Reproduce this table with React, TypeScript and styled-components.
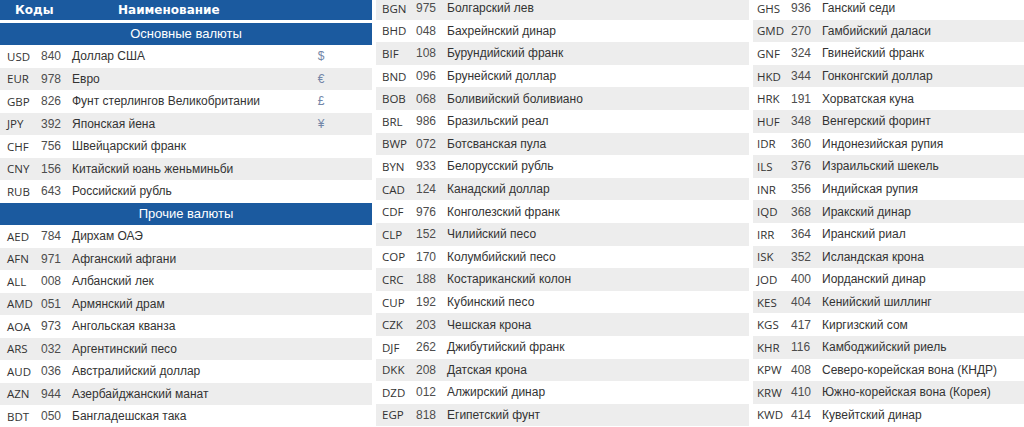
import React from "react"
import styled, { createGlobalStyle } from "styled-components"

const GlobalStyle = createGlobalStyle`
  html, body {
    margin: 0;
    padding: 0;
    background: #ffffff;
    overflow: hidden;
  }
  body {
    width: 1024px;
    height: 427px;
    font-family: "Liberation Sans", Arial, sans-serif;
  }
`

type Currency = [string, string, string, string?]

const mainCurrencies: Currency[] = [
  ["USD", "840", "Доллар США", "$"],
  ["EUR", "978", "Евро", "€"],
  ["GBP", "826", "Фунт стерлингов Великобритании", "£"],
  ["JPY", "392", "Японская йена", "¥"],
  ["CHF", "756", "Швейцарский франк"],
  ["CNY", "156", "Китайский юань женьминьби"],
  ["RUB", "643", "Российский рубль"],
]

const otherCurrencies: Currency[] = [
  ["AED", "784", "Дирхам ОАЭ"],
  ["AFN", "971", "Афганский афгани"],
  ["ALL", "008", "Албанский лек"],
  ["AMD", "051", "Армянский драм"],
  ["AOA", "973", "Ангольская кванза"],
  ["ARS", "032", "Аргентинский песо"],
  ["AUD", "036", "Австралийский доллар"],
  ["AZN", "944", "Азербайджанский манат"],
  ["BDT", "050", "Бангладешская така"],
]

const secondColumn: Currency[] = [
  ["BGN", "975", "Болгарский лев"],
  ["BHD", "048", "Бахрейнский динар"],
  ["BIF", "108", "Бурундийский франк"],
  ["BND", "096", "Брунейский доллар"],
  ["BOB", "068", "Боливийский боливиано"],
  ["BRL", "986", "Бразильский реал"],
  ["BWP", "072", "Ботсванская пула"],
  ["BYN", "933", "Белорусский рубль"],
  ["CAD", "124", "Канадский доллар"],
  ["CDF", "976", "Конголезский франк"],
  ["CLP", "152", "Чилийский песо"],
  ["COP", "170", "Колумбийский песо"],
  ["CRC", "188", "Костариканский колон"],
  ["CUP", "192", "Кубинский песо"],
  ["CZK", "203", "Чешская крона"],
  ["DJF", "262", "Джибутийский франк"],
  ["DKK", "208", "Датская крона"],
  ["DZD", "012", "Алжирский динар"],
  ["EGP", "818", "Египетский фунт"],
]

const thirdColumn: Currency[] = [
  ["GHS", "936", "Ганский седи"],
  ["GMD", "270", "Гамбийский даласи"],
  ["GNF", "324", "Гвинейский франк"],
  ["HKD", "344", "Гонконгский доллар"],
  ["HRK", "191", "Хорватская куна"],
  ["HUF", "348", "Венгерский форинт"],
  ["IDR", "360", "Индонезийская рупия"],
  ["ILS", "376", "Израильский шекель"],
  ["INR", "356", "Индийская рупия"],
  ["IQD", "368", "Иракский динар"],
  ["IRR", "364", "Иранский риал"],
  ["ISK", "352", "Исландская крона"],
  ["JOD", "400", "Иорданский динар"],
  ["KES", "404", "Кенийский шиллинг"],
  ["KGS", "417", "Киргизский сом"],
  ["KHR", "116", "Камбоджийский риель"],
  ["KPW", "408", "Северо-корейская вона (КНДР)"],
  ["KRW", "410", "Южно-корейская вона (Корея)"],
  ["KWD", "414", "Кувейтский динар"],
]

const Page = styled.div`
  display: grid;
  grid-template-columns: 372px 373px 1fr;
  column-gap: 4px;
  width: 1024px;
  height: 427px;
  overflow: hidden;
`

const Column = styled.div<{ $shift: number }>`
  display: flex;
  flex-direction: column;
  margin-top: ${(p) => p.$shift}px;
`

const HeadRow = styled.div`
  display: flex;
  align-items: center;
  height: 20px;
  margin-bottom: 2.5px;
  background: #1b5a9f;
  color: #ffffff;
  font-family: "DejaVu Sans", Verdana, sans-serif;
  font-weight: bold;
  font-size: 12px;
  span:first-child {
    width: 118px;
    padding-left: 15px;
    box-sizing: border-box;
  }
`

const Band = styled.div`
  height: 22.5px;
  display: flex;
  align-items: center;
  justify-content: center;
  background: #1b5a9f;
  color: #ffffff;
  font-size: 13px;
`

const Row = styled.div<{ $striped: boolean; $pad: number; $h: number }>`
  display: grid;
  grid-template-columns: 34px 31px 1fr 62px;
  align-items: center;
  height: ${(p) => p.$h}px;
  padding-left: ${(p) => p.$pad}px;
  padding-right: 20px;
  background: ${(p) => (p.$striped ? "#ededed" : "#ffffff")};
  white-space: nowrap;
`

const Code = styled.span`
  font-family: "Open Sans", sans-serif;
  font-size: 11.5px;
  color: #333333;
`

const Num = styled.span`
  font-size: 12px;
  color: #4d4d4d;
`

const Name = styled.span`
  font-size: 12px;
  color: #333333;
`

const Symbol = styled.span`
  text-align: center;
  font-size: 12px;
  color: #7386a8;
`

const CurrencyRow: React.FC<{
  item: Currency
  striped: boolean
  pad: number
  h: number
}> = ({ item, striped, pad, h }) => (
  <Row $striped={striped} $pad={pad} $h={h}>
    <Code>{item[0]}</Code>
    <Num>{item[1]}</Num>
    <Name>{item[2]}</Name>
    <Symbol>{item[3] ?? ""}</Symbol>
  </Row>
)

const App: React.FC = () => {
  return (
    <>
      <GlobalStyle />
      <Page>
        <Column $shift={0}>
          <HeadRow>
            <span>{"Коды"}</span>
            <span>{"Наименование"}</span>
          </HeadRow>
          <Band>{"Основные валюты"}</Band>
          {mainCurrencies.map((c, i) => (
            <CurrencyRow key={c[0]} item={c} striped={i % 2 === 1} pad={7} h={22.5} />
          ))}
          <Band>{"Прочие валюты"}</Band>
          {otherCurrencies.map((c, i) => (
            <CurrencyRow key={c[0]} item={c} striped={i % 2 === 1} pad={7} h={22.5} />
          ))}
        </Column>
        <Column $shift={-3}>
          {secondColumn.map((c, i) => (
            <CurrencyRow key={c[0]} item={c} striped={i % 2 === 0} pad={6} h={22.6} />
          ))}
        </Column>
        <Column $shift={-3}>
          {thirdColumn.map((c, i) => (
            <CurrencyRow key={c[0]} item={c} striped={i % 2 === 1} pad={4} h={22.6} />
          ))}
        </Column>
      </Page>
    </>
  )
}

export default App
